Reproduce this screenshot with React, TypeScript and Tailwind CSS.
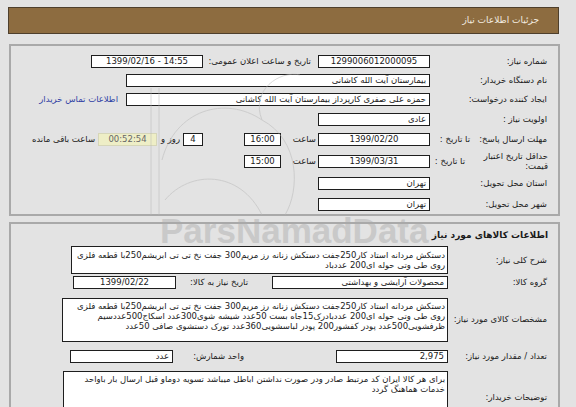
import React from "react";

const inp = "h-[13px] bg-white border border-[#1e1e1e] px-[3px] flex items-center whitespace-nowrap overflow-hidden";

export default function App() {
  return (
    <div
      dir="rtl"
      className="relative w-[576px] h-[407px] overflow-hidden bg-[#e3e3e3] font-['DejaVu_Sans',sans-serif] text-[8.5px] leading-[11px] text-[#1a1a1a]"
    >
      {/* واترمارک پشت محتوا */}
      <div
        dir="ltr"
        className="pointer-events-none absolute z-0 left-[160px] top-[213px] font-['Liberation_Sans',sans-serif] font-bold text-[35px] leading-[36px] text-[#c9c9c9]"
      >
        ParsNamadData
      </div>

      <div className="relative z-10 pt-[7px] pl-[8px] pr-[17px]">
        {/* عنوان */}
        <div className="h-[27px] bg-[#8d6c40] border border-[#4e3f2c] flex items-center pr-[19px] text-[#f3ece0] text-[9px]">
          جزئیات اطلاعات نیاز
        </div>
      </div>

      <div className="relative z-10 pl-[9px] pr-[16px]">
        {/* پنل اول */}
        <div className="mt-[10px] border-2 border-[#a9a9a9] pt-[5px]">
          <div className="flex items-center h-[20px]">
            <div className="w-[128px] pr-[11px]">شماره نیاز:</div>
            <div className={`${inp} w-[112px] justify-center`}>1299006012000095</div>
            <div className="w-[115px] pr-[7px]">تاریخ و ساعت اعلان عمومی:</div>
            <div dir="ltr" className={`${inp} w-[112px] justify-center`}>1399/02/16 - 14:55</div>
          </div>
          <div className="flex items-center h-[18px]">
            <div className="w-[128px] pr-[11px]">نام دستگاه خریدار:</div>
            <div className={`${inp} w-[304px]`}>بیمارستان آیت الله کاشانی</div>
          </div>
          <div className="flex items-center h-[20px]">
            <div className="w-[128px] pr-[11px]">ایجاد کننده درخواست:</div>
            <div className={`${inp} w-[304px]`}>حمزه علی صفری کارپرداز بیمارستان آیت الله کاشانی</div>
            <div className="mr-[8px] text-[#2f3fa3]">اطلاعات تماس خریدار</div>
          </div>
          <div className="flex items-center h-[20px]">
            <div className="w-[128px] pr-[11px]">اولویت نیاز :</div>
            <div className={`${inp} w-[112px]`}>عادی</div>
          </div>
          <div className="flex items-center h-[20px]">
            <div className="w-[88px] pr-[11px]">مهلت ارسال پاسخ:</div>
            <div className="w-[40px]">تا تاریخ :</div>
            <div className={`${inp} w-[112px] justify-center`}>1399/02/20</div>
            <div className="w-[37px] pr-[2px]">ساعت</div>
            <div className={`${inp} w-[37px] justify-center`}>16:00</div>
            <div className="w-[41px]" />
            <div className={`${inp} w-[20px] justify-center`}>4</div>
            <div className="w-[26px] pr-[3px]">روز و</div>
            <div className="h-[13px] w-[59px] bg-[#eeeec6] border border-[#d6d6b8] flex items-center justify-center text-[#666]">
              00:52:54
            </div>
            <div className="pr-[3px]">ساعت باقی مانده</div>
          </div>
          <div className="flex items-center h-[24px]">
            <div className="w-[88px] pr-[10px] leading-[10px]">
              حداقل تاریخ اعتبار
              <br />
              قیمت:
            </div>
            <div className="w-[40px] pr-[5px]">تا تاریخ :</div>
            <div className={`${inp} w-[112px] justify-center`}>1399/03/31</div>
            <div className="w-[37px] pr-[2px]">ساعت</div>
            <div className={`${inp} w-[37px] justify-center`}>15:00</div>
          </div>
          <div className="flex items-center h-[21px]">
            <div className="w-[128px] pr-[11px]">استان محل تحویل:</div>
            <div className={`${inp} w-[112px]`}>تهران</div>
          </div>
          <div className="flex items-center h-[20px]">
            <div className="w-[128px] pr-[11px]">شهر محل تحویل:</div>
            <div className={`${inp} w-[112px]`}>تهران</div>
          </div>
        </div>

        {/* پنل دوم */}
        <div className="mt-[6px] border-2 border-[#a9a9a9] h-[200px]">
          <div className="flex items-center h-[22px] pr-[10px] font-bold text-[9px]">اطلاعات کالاهای مورد نیاز</div>
          <div className="flex items-center h-[28px]">
            <div className="w-[110px] pr-[11px]">شرح کلی نیاز:</div>
            <div className="w-[377px] h-[28px] bg-white border border-[#1e1e1e] px-[2px] pt-[3px] leading-[10px]">
              دستکش مردانه استاد کار250جفت دستکش زنانه رز مریم300 جفت نخ تی تی ابریشم250با قطعه فلزی روی طی وتی حوله ای200 عددباد
            </div>
          </div>
          <div className="flex items-center h-[17px]">
            <div className="w-[110px] pr-[11px]">گروه کالا:</div>
            <div className={`${inp} w-[176px]`}>محصولات آرایشی و بهداشتی</div>
            <div className="w-[96px] pr-[24px]">تاریخ نیاز به کالا:</div>
            <div className={`${inp} w-[103px] justify-center`}>1399/02/22</div>
          </div>
          <div className="flex items-center h-[57px]">
            <div className="w-[110px] pr-[11px]">مشخصات کالای مورد نیاز:</div>
            <div className="w-[386px] h-[44px] bg-white border border-[#1e1e1e] px-[2px] pt-[2px] leading-[10px]">
              دستکش مردانه استاد کار250جفت دستکش زنانه رز مریم300 جفت نخ تی تی ابریشم250با قطعه فلزی روی طی وتی حوله ای200 عددبادرک15جاه بست 50عدد شیشه شوی300عدد اسکاج500عددسیم ظرفشویی500عدد پودر کفشور200 پودر لباسشویی360عدد تورک دستشوی صافی 50عدد
            </div>
          </div>
          <div className="flex items-center h-[17px]">
            <div className="w-[110px] pr-[11px]">تعداد / مقدار مورد نیاز:</div>
            <div className={`${inp} w-[112px]`}>2,975</div>
            <div className="w-[163px] pr-[92px]">واحد شمارش:</div>
            <div className={`${inp} w-[103px]`}>عدد</div>
          </div>
          <div className="flex pt-[6px]">
            <div className="w-[110px] pr-[11px] flex items-center">توضیحات خریدار:</div>
            <div className="w-[385px] h-[52px] bg-white border border-[#1e1e1e] px-[2px] pt-[2px] leading-[10px]">
              برای هر کالا ایران کد مرتبط صادر ودر صورت نداشتن اباطل میباشد تسویه دوماو قبل ارسال بار باواحد خدمات هماهنگ گردد
            </div>
          </div>
        </div>
      </div>

      {/* خطوط کم‌رنگ لوگو */}
      <svg
        className="pointer-events-none absolute z-20 left-0 top-0 opacity-50"
        width="576"
        height="407"
        viewBox="0 0 576 407"
        fill="none"
        stroke="#b8b8b8"
        strokeWidth="1"
      >
        <path d="M151 88 V215 M159 88 V215" />
        <path d="M162 160 C175 110 225 95 262 120 C300 140 300 190 285 215" />
        <path d="M165 200 C190 170 240 170 262 215" />
        <path d="M262 120 C250 90 280 70 300 75" />
      </svg>
    </div>
  );
}
